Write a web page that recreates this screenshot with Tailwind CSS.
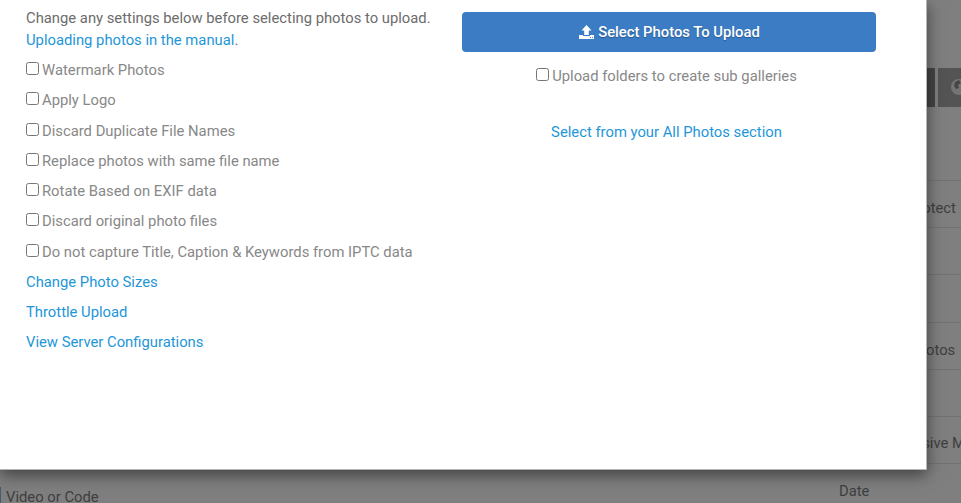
<!DOCTYPE html>
<html lang="en">
<head>
  <meta charset="UTF-8" />
  <title>Upload Photos</title>
  <script src="https://cdn.jsdelivr.net/npm/@tailwindcss/browser@4"></script>
</head>
<body class="bg-white font-['Roboto',sans-serif] text-[14.8px] overflow-hidden">
  <div class="relative w-[961px] h-[503px] overflow-hidden">

    <!-- page behind the modal -->
    <div class="flex w-full h-full">
      <div class="flex-1 pt-[487px] pl-0">
        <div class="flex items-center gap-[5px] text-[#7e7e7e] leading-5">
          <span class="w-[1px] h-5 bg-[#3b8ec4]/60"></span>
          <span>Video or Code</span>
        </div>
      </div>
      <div class="w-[122px] shrink-0 text-[#7e7e7e]">
        <div class="h-[68px]"></div>
        <div class="flex gap-1 h-[39px] -ml-[4px]">
          <div class="w-[100px] bg-[#8a8a8a]"></div>
        </div>
        <div class="h-[74px] border-b border-[#e4e4e4]"></div>
        <div class="h-[47px] border-b border-[#e4e4e4] leading-[54px] whitespace-nowrap">Password Protect</div>
        <div class="h-[47px] border-b border-[#e4e4e4]"></div>
        <div class="h-[48px] border-b border-[#e4e4e4]"></div>
        <div class="h-[47px] border-b border-[#e4e4e4] leading-[54px] whitespace-nowrap">Download Photos</div>
        <div class="h-[47px] border-b border-[#e4e4e4] leading-[52px] whitespace-nowrap">Gallery Order</div>
        <div class="h-[47px] border-b border-[#e4e4e4] leading-[52px] whitespace-nowrap">Enable Exclusive Media</div>
        <div class="leading-[54px]">Date</div>
      </div>
    </div>
    <div class="absolute right-0 top-[68px] w-[23px] h-[39px] bg-[#a8a8a8] pl-[12px] pt-[10px]">
      <svg width="18" height="18" viewBox="0 0 18 18"><circle cx="9" cy="9" r="8" fill="#e8e8e8"/><path d="M5 4l4-2 2 3-3 2 1 3-3 1-2-3zM11 9l4 1-1 5-3 1z" fill="#8c8c8c"/></svg>
    </div>

    <!-- backdrop -->
    <div class="absolute inset-0 bg-black/50"></div>

    <!-- modal -->
    <div class="absolute left-0 top-0 w-[927px] h-[470px] bg-white border-r border-b border-[#b5b5b5] shadow-[0_5px_15px_rgba(0,0,0,0.5)] flex pl-[26px] pr-[50px] pt-[7px]">
      <div class="w-[436px] shrink-0">
        <p class="text-[#6c6c6c] leading-[22px]">Change any settings below before selecting photos to upload.<br><a class="text-[#1e96d8]">Uploading photos in the manual</a>.</p>
        <div class="flex flex-col mt-[4px] text-[#888888] leading-[30px]">
          <label class="flex items-center h-[30px]"><input type="checkbox" class="mr-[3px] -mt-[3px]">Watermark Photos</label>
          <label class="flex items-center h-[30px] mb-[1px]"><input type="checkbox" class="mr-[3px] -mt-[3px]">Apply Logo</label>
          <label class="flex items-center h-[30px]"><input type="checkbox" class="mr-[3px] -mt-[3px]">Discard Duplicate File Names</label>
          <label class="flex items-center h-[30px]"><input type="checkbox" class="mr-[3px] -mt-[3px]">Replace photos with same file name</label>
          <label class="flex items-center h-[30px]"><input type="checkbox" class="mr-[3px] -mt-[3px]">Rotate Based on EXIF data</label>
          <label class="flex items-center h-[30px] mb-[1px]"><input type="checkbox" class="mr-[3px] -mt-[3px]">Discard original photo files</label>
          <label class="flex items-center h-[30px]"><input type="checkbox" class="mr-[3px] -mt-[3px]">Do not capture Title, Caption &amp; Keywords from IPTC data</label>
          <a class="text-[#1e96d8] h-[30px]">Change Photo Sizes</a>
          <a class="text-[#1e96d8] h-[30px]">Throttle Upload</a>
          <a class="text-[#1e96d8] h-[30px]">View Server Configurations</a>
        </div>
      </div>
      <div class="flex-1 flex flex-col items-center pt-[5px]">
        <button class="w-full h-[40px] flex items-center justify-center gap-[4px] pl-[1px] bg-[#3b7cc4] rounded-[4px] text-white font-medium [text-shadow:0_1px_1px_rgba(0,0,0,0.3)]">
          <svg width="15" height="14" viewBox="0 0 15 14" fill="#fff"><path d="M7.500 0L12.500 5.500H9.800v4.500H5.200V5.500H2.500zM0 10h4v1h7v-1h4v4H0z"/><path d="M11 12h1v1h-1zM13 12h1v1h-1z" fill="#3b7cc4"/></svg>
          Select Photos To Upload
        </button>
        <label class="flex items-center h-[30px] mt-[9px] mr-[5px] text-[#888888]"><input type="checkbox" class="mr-[3px] -mt-[3px]">Upload folders to create sub galleries</label>
        <a class="text-[#1e96d8] mt-[26px] mr-[5px] leading-[30px]">Select from your All Photos section</a>
      </div>
    </div>
  </div>
</body>
</html>
